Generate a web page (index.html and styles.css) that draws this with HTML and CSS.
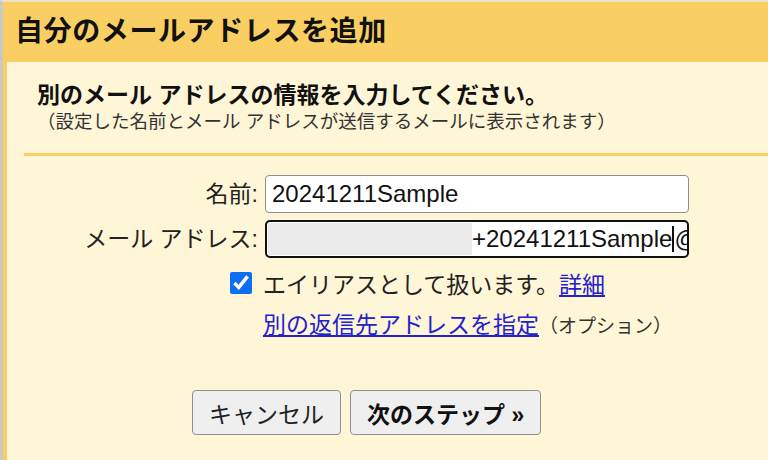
FILE: index.html
```html
<!DOCTYPE html>
<html lang="ja">
<head>
    <meta charset="UTF-8">
    <meta name="viewport" content="width=device-width, initial-scale=1.0">
    <title>自分のメールアドレスを追加</title>
    <link rel="stylesheet" href="styles.css">
</head>
<body>
    <div class="frame">
        <div class="titlebar">
            <h1>自分のメールアドレスを追加</h1>
        </div>
        <div class="content">
            <div class="intro">
                <h2>別のメール アドレスの情報を入力してください。</h2>
                <p>（設定した名前とメール アドレスが送信するメールに表示されます）</p>
            </div>
            <div class="divider"></div>

            <div class="row row-first">
                <label class="field-label" for="name">名前:</label>
                <input class="text-field" type="text" id="name" value="20241211Sample">
            </div>
            <div class="row">
                <label class="field-label">メール アドレス:</label>
                <div class="text-field email-field">
                    <span class="redacted"></span>
                    <span class="email-text">+20241211Sample</span><span class="caret"></span><span class="email-text">@</span>
                </div>
            </div>

            <div class="alias-row">
                <input type="checkbox" id="alias" checked>
                <label for="alias">エイリアスとして扱います。</label><a href="#">詳細</a>
            </div>
            <div class="reply-row">
                <a href="#">別の返信先アドレスを指定</a><span class="optional">（オプション）</span>
            </div>

            <div class="buttons">
                <button type="button">キャンセル</button>
                <button type="button" class="next">次のステップ »</button>
            </div>
        </div>
    </div>
</body>
</html>
```

FILE: styles.css
```css
html, body {
    margin: 0;
    height: 100%;
}

body {
    font-family: "Liberation Sans", "Noto Sans CJK JP", sans-serif;
    color: #222;
    background-color: #fff5d7;
}

.frame {
    height: 100%;
    box-sizing: border-box;
    border-left: 3px solid #c8c8c8;
    border-top: 2px solid #ece2c8;
    display: flex;
    flex-direction: column;
}

.titlebar {
    height: 60px;
    flex-shrink: 0;
    background-color: #f9ce62;
    padding-left: 12px;
    display: flex;
    align-items: center;
}

h1 {
    margin: 0;
    font-size: 28px;
    letter-spacing: 0.6px;
    font-weight: bold;
    line-height: 1;
    color: #111;
}

.content {
    flex: 1;
    border-left: 4px solid #f9ce62;
    background-color: #fff5d7;
}

.intro {
    padding: 18px 0 0 30px;
}

h2 {
    margin: 0;
    font-size: 23px;
    line-height: 30px;
    font-weight: bold;
    color: #111;
}

.intro p {
    margin: 0;
    font-size: 18.5px;
    line-height: 24px;
    color: #333;
}

.divider {
    height: 3px;
    margin: 19px 0 0 17px;
    background-color: #f9ce62;
}

.row {
    display: flex;
    align-items: center;
    gap: 7px;
    margin-top: 7px;
}

.row-first {
    margin-top: 19px;
}

.field-label {
    width: 251px;
    text-align: right;
    font-size: 23px;
    line-height: 38px;
}

.text-field {
    width: 424px;
    height: 38px;
    box-sizing: border-box;
    margin: 0;
    padding: 0 6px;
    border: 1px solid #8f8f8f;
    border-radius: 4px;
    background-color: #fff;
    font-family: "Liberation Sans", sans-serif;
    font-size: 24px;
    color: #111;
}

.email-field {
    border: 2px solid #111;
    border-radius: 5px;
    padding: 0 0 0 1px;
    display: flex;
    align-items: center;
    overflow: hidden;
    white-space: nowrap;
}

.redacted {
    flex-shrink: 0;
    width: 204px;
    height: 32px;
    background-color: #ebebeb;
}

.caret {
    flex-shrink: 0;
    width: 2px;
    height: 26px;
    background-color: #111;
}

.alias-row {
    display: flex;
    align-items: center;
    height: 30px;
    margin: 10px 0 0 223px;
    font-size: 23px;
}

.alias-row input {
    width: 22px;
    height: 22px;
    margin: 0 11px 0 0;
    accent-color: #0b6ef5;
}

a {
    color: #2222cc;
}

.reply-row {
    height: 30px;
    line-height: 30px;
    margin: 12px 0 0 256px;
    font-size: 23px;
}

.optional {
    font-size: 19px;
    color: #333;
}

.buttons {
    display: flex;
    gap: 9px;
    margin: 50px 0 0 185px;
}

button {
    height: 45px;
    padding: 0 16px;
    font-family: "Liberation Sans", "Noto Sans CJK JP", sans-serif;
    font-size: 23px;
    color: #222;
    background-color: #efefef;
    border: 1.5px solid #8f8f8f;
    border-radius: 4px;
}

.next {
    font-weight: bold;
    color: #111;
}
```
